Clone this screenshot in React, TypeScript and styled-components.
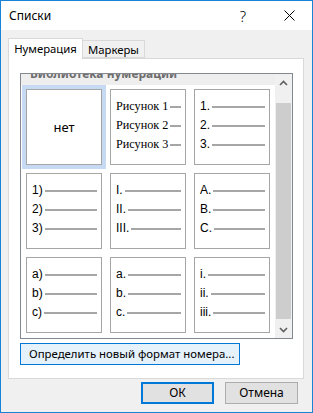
import React from "react";
import styled, { createGlobalStyle } from "styled-components";

const Global = createGlobalStyle`
  html, body { margin: 0; padding: 0; background: #ffffff; }
  * { box-sizing: border-box; }
`;

const UI_FONT = `"Noto Sans", "Liberation Sans", sans-serif`;

const Window = styled.div`
  width: 313px;
  height: 413px;
  border: 1px solid #1883d7;
  background: #f0f0f0;
  display: flex;
  flex-direction: column;
  font-family: ${UI_FONT};
  font-size: 12px;
  color: #000;
  overflow: hidden;
`;

const TitleBar = styled.div`
  height: 29px;
  background: #ffffff;
  display: flex;
  align-items: center;
  padding-left: 8px;
  flex-shrink: 0;
`;

const Title = styled.div`
  flex: 1;
  font-size: 12px;
  line-height: 16px;
`;

const HelpButton = styled.div`
  width: 46px;
  text-align: center;
  font-size: 15px;
  font-weight: 300;
  color: #000;
`;

const CloseButton = styled.div`
  width: 46px;
  height: 29px;
  display: flex;
  align-items: center;
  justify-content: center;
`;

const Body = styled.div`
  flex: 1;
  display: flex;
  flex-direction: column;
  padding: 8px 8px 8px 7px;
`;

const TabRow = styled.div`
  display: flex;
  align-items: flex-end;
  height: 20px;
  position: relative;
  z-index: 1;
`;

const Tab = styled.div<{ $active?: boolean }>`
  width: ${(p) => (p.$active ? "75px" : "62px")};
  height: ${(p) => (p.$active ? "21px" : "18px")};
  margin-bottom: ${(p) => (p.$active ? "-1px" : "0")};
  background: ${(p) => (p.$active ? "#ffffff" : "#f0f0f0")};
  border: 1px solid #d9d9d9;
  border-bottom: ${(p) => (p.$active ? "none" : "1px solid #d9d9d9")};
  border-left: ${(p) => (p.$active ? "1px solid #d9d9d9" : "none")};
  display: flex;
  align-items: center;
  justify-content: center;
  font-size: 11.3px;
  line-height: 16px;
  white-space: nowrap;
  padding-top: ${(p) => (p.$active ? "0px" : "1px")};
`;

const Panel = styled.div`
  height: 321px;
  background: #ffffff;
  border: 1px solid #d9d9d9;
  padding: 14px 9px 13px 11px;
  display: flex;
  flex-direction: column;
  gap: 4px;
`;

const ListBox = styled.div`
  width: 273px;
  height: 266px;
  border: 1px solid #828790;
  display: flex;
  background: #ffffff;
`;

const ListViewport = styled.div`
  flex: 1;
  overflow: hidden;
`;

const ListContent = styled.div`
  margin-top: -11px;
`;

const GroupHeader = styled.div`
  height: 22px;
  background: #eeeeee;
  padding-left: 9px;
  font-weight: 700;
  font-size: 12px;
  line-height: 22px;
  color: #6d6d6d;
  white-space: nowrap;
`;

const Grid = styled.div`
  display: grid;
  grid-template-columns: repeat(3, 84px);
  grid-auto-rows: 84px;
  padding-left: 1px;
`;

const Slot = styled.div<{ $selected?: boolean }>`
  padding: 4px;
  background: ${(p) => (p.$selected ? "#c6daf3" : "transparent")};
`;

const Cell = styled.div<{ $top: number }>`
  width: 76px;
  height: 76px;
  border: 1px solid #a6a6a6;
  background: #ffffff;
  padding: ${(p) => p.$top}px 4px 0 5px;
  display: flex;
  flex-direction: column;
`;

const NoneCell = styled(Cell)`
  align-items: center;
  justify-content: center;
  padding: 0;
  font-size: 13px;
`;

const Row = styled.div`
  height: 19px;
  display: flex;
  align-items: center;
`;

const Marker = styled.span`
  font-family: "Liberation Sans", Arial, sans-serif;
  font-size: 12px;
  line-height: 19px;
  white-space: nowrap;
`;

const SerifMarker = styled.span`
  font-family: "Liberation Serif", "Times New Roman", serif;
  font-size: 12.2px;
  line-height: 19px;
  white-space: nowrap;
`;

const Rule = styled.div`
  flex: 1;
  height: 2px;
  background: #a6a6a6;
  margin-left: 2px;
  margin-top: 1px;
`;

const ScrollBar = styled.div`
  width: 17px;
  background: #f0f0f0;
  display: flex;
  flex-direction: column;
`;

const ScrollArrow = styled.div`
  height: 17px;
  display: flex;
  align-items: center;
  justify-content: center;
`;

const ScrollTrack = styled.div`
  flex: 1;
  padding: 12px 0 2px;
  display: flex;
  flex-direction: column;
`;

const ScrollThumb = styled.div`
  flex: 1;
  margin: 0 1px;
  background: #cdcdcd;
`;

const DefineButton = styled.button`
  width: 220px;
  height: 22px;
  border: 1px solid #0078d7;
  background: #e5f1fb;
  font-family: ${UI_FONT};
  font-size: 11.4px;
  color: #000;
  text-align: left;
  white-space: nowrap;
  padding: 0 0 0 8px;
  margin: 0;
  line-height: 18px;
`;

const Footer = styled.div`
  display: flex;
  justify-content: flex-end;
  gap: 11px;
  padding: 3px 6px 0 0;
`;

const DialogButton = styled.button<{ $default?: boolean }>`
  width: 73px;
  height: 22px;
  margin: 0;
  padding: 0;
  background: #e1e1e1;
  border: ${(p) => (p.$default ? "2px solid #0078d7" : "1px solid #adadad")};
  font-family: ${UI_FONT};
  font-size: 12px;
  color: #000;
  line-height: 16px;
`;

type CellDef =
  | { kind: "none" }
  | { kind: "figure" }
  | { kind: "list"; markers: string[] };

const cells: CellDef[] = [
  { kind: "none" },
  { kind: "figure" },
  { kind: "list", markers: ["1.", "2.", "3."] },
  { kind: "list", markers: ["1)", "2)", "3)"] },
  { kind: "list", markers: ["I.", "II.", "III."] },
  { kind: "list", markers: ["A.", "B.", "C."] },
  { kind: "list", markers: ["a)", "b)", "c)"] },
  { kind: "list", markers: ["a.", "b.", "c."] },
  { kind: "list", markers: ["i.", "ii.", "iii."] },
];

const Chevron = ({ up }: { up?: boolean }) => (
  <svg width="9" height="6" viewBox="0 0 9 6">
    <path
      d={up ? "M1 5 L4.5 1.5 L8 5" : "M1 1 L4.5 4.5 L8 1"}
      fill="none"
      stroke="#606060"
      strokeWidth="1.6"
    />
  </svg>
);

const renderCell = (c: CellDef) => {
  if (c.kind === "none") return <NoneCell $top={0}>нет</NoneCell>;
  if (c.kind === "figure")
    return (
      <Cell $top={7}>
        {[1, 2, 3].map((n) => (
          <Row key={n}>
            <SerifMarker>Рисунок {n}</SerifMarker>
            <Rule />
          </Row>
        ))}
      </Cell>
    );
  return (
    <Cell $top={7}>
      {c.markers.map((m) => (
        <Row key={m}>
          <Marker>{m}</Marker>
          <Rule />
        </Row>
      ))}
    </Cell>
  );
};

export default function App() {
  return (
    <>
      <Global />
      <Window>
        <TitleBar>
          <Title>Списки</Title>
          <HelpButton>?</HelpButton>
          <CloseButton>
            <svg width="11" height="11" viewBox="0 0 11 11">
              <path d="M0.5 0.5 L10.5 10.5 M10.5 0.5 L0.5 10.5" stroke="#000" strokeWidth="1" />
            </svg>
          </CloseButton>
        </TitleBar>
        <Body>
          <TabRow>
            <Tab $active>Нумерация</Tab>
            <Tab>Маркеры</Tab>
          </TabRow>
          <Panel>
            <ListBox>
              <ListViewport>
                <ListContent>
                  <GroupHeader>Библиотека нумерации</GroupHeader>
                  <Grid>
                    {cells.map((c, i) => (
                      <Slot key={i} $selected={i === 0}>
                        {renderCell(c)}
                      </Slot>
                    ))}
                  </Grid>
                </ListContent>
              </ListViewport>
              <ScrollBar>
                <ScrollArrow>
                  <Chevron up />
                </ScrollArrow>
                <ScrollTrack>
                  <ScrollThumb />
                </ScrollTrack>
                <ScrollArrow>
                  <Chevron />
                </ScrollArrow>
              </ScrollBar>
            </ListBox>
            <DefineButton>Определить новый формат номера...</DefineButton>
          </Panel>
          <Footer>
            <DialogButton $default>ОК</DialogButton>
            <DialogButton>Отмена</DialogButton>
          </Footer>
        </Body>
      </Window>
    </>
  );
}
